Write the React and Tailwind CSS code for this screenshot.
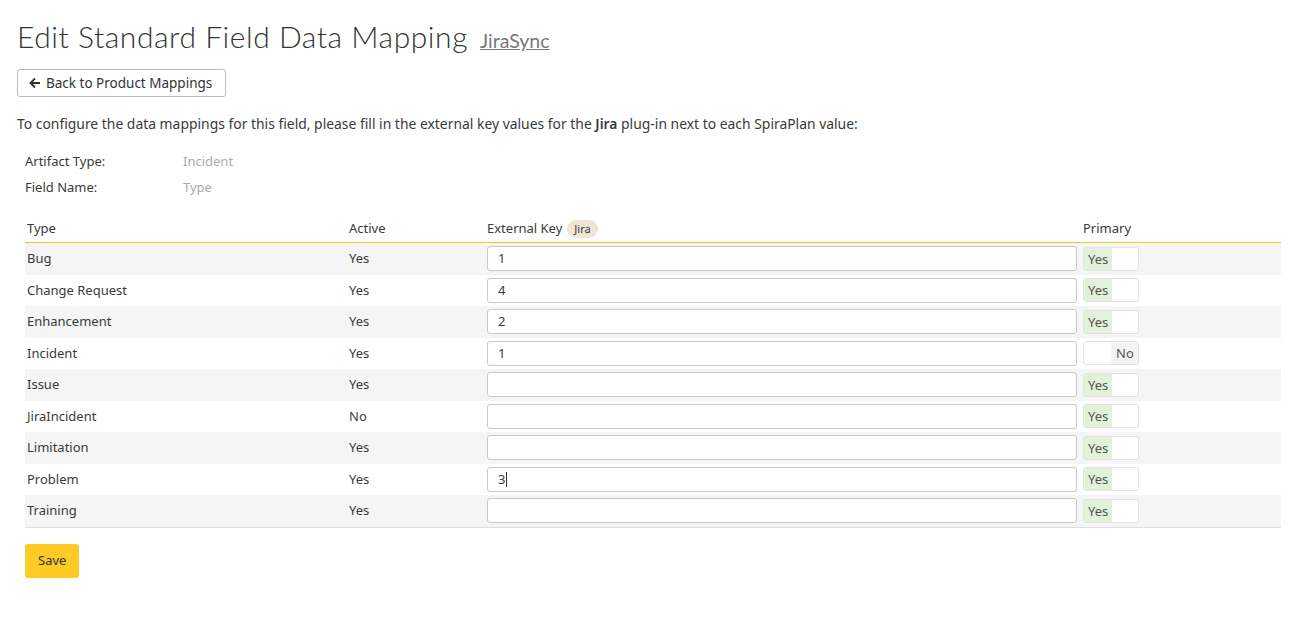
import React from 'react';

const rows = [
  { type: 'Bug', active: 'Yes', key: '1', primary: true },
  { type: 'Change Request', active: 'Yes', key: '4', primary: true },
  { type: 'Enhancement', active: 'Yes', key: '2', primary: true },
  { type: 'Incident', active: 'Yes', key: '1', primary: false },
  { type: 'Issue', active: 'Yes', key: '', primary: true },
  { type: 'JiraIncident', active: 'No', key: '', primary: true },
  { type: 'Limitation', active: 'Yes', key: '', primary: true },
  { type: 'Problem', active: 'Yes', key: '3', primary: true, caret: true },
  { type: 'Training', active: 'Yes', key: '', primary: true },
];

const Toggle = ({ on }) => (
  <div className="flex h-[24px] w-[56px] overflow-hidden rounded-[3px] border border-[#e2e2e2] bg-white text-[13px] leading-[22px] text-[#555]">
    {on ? (
      <>
        <div className="w-[28px] bg-[#e1f1da] pl-[4px]">Yes</div>
        <div className="flex-1" />
      </>
    ) : (
      <>
        <div className="w-[27px]" />
        <div className="flex-1 bg-[#f3f3f3] pl-[5px]">No</div>
      </>
    )}
  </div>
);

export default function App() {
  return (
    <div className="min-h-screen bg-white text-[13px] text-[#3a3a3a]" style={{ fontFamily: '"Noto Sans", sans-serif' }}>
      <div className="px-[17px] pt-[14px]">
        <h1 className="flex items-baseline text-[#333]">
          <span className="text-[30px] font-light tracking-[0.55px]" style={{ fontFamily: 'Lato, sans-serif' }}>
            Edit Standard Field Data Mapping
          </span>
          <a href="#" className="ml-[12px] text-[19.5px] font-normal text-[#777] underline" style={{ fontFamily: 'Lato, sans-serif' }}>
            JiraSync
          </a>
        </h1>

        <button className="mt-[10px] flex h-[28px] items-center gap-[5px] rounded-[3px] border border-[#bbb] bg-white pl-[11px] pr-[13px] text-[13.5px] text-[#333]">
          <svg width="12" height="12" viewBox="0 0 12 12" fill="none" stroke="#333" strokeWidth="1.8">
            <path d="M11 6H2M6 1.5L1.5 6 6 10.5" />
          </svg>
          Back to Product Mappings
        </button>

        <p className="mt-[17px] text-[13.9px] leading-[20px]">
          To configure the data mappings for this field, please fill in the external key values for the <b className="font-semibold">Jira</b> plug-in next to each SpiraPlan value:
        </p>

        <div className="mt-[15px] pl-[8px]">
          <div className="flex h-[26px] items-center">
            <span className="w-[158px]">Artifact Type:</span>
            <span className="text-[#aaa]">Incident</span>
          </div>
          <div className="flex h-[26px] items-center">
            <span className="w-[158px]">Field Name:</span>
            <span className="text-[#aaa]">Type</span>
          </div>
        </div>

        <div className="ml-[8px] mr-[2px] mt-[14px] border-b border-[#ddd]">
          <div className="flex h-[28px] items-center border-b border-[#f3c42c]">
            <div className="w-[324px] pl-[2px]">Type</div>
            <div className="w-[138px]">Active</div>
            <div className="flex w-[596px] items-center gap-[5px]">
              External Key
              <span className="rounded-full bg-[#efe6d2] px-[7px] text-[11px] leading-[18px]">Jira</span>
            </div>
            <div>Primary</div>
          </div>
          {rows.map((r, i) => (
            <div key={r.type} className={`flex h-[31.5px] items-center ${i % 2 === 0 ? 'bg-[#f5f5f5]' : 'bg-white'}`}>
              <div className="w-[324px] pl-[2px]">{r.type}</div>
              <div className="w-[138px]">{r.active}</div>
              <div className="w-[596px] pr-[6px]">
                <div className="flex h-[25px] items-center rounded-[3px] border border-[#c9c9c9] bg-white px-[10px]">
                  {r.key}
                  {r.caret && <span className="ml-[1px] inline-block h-[15px] w-px bg-[#333]" />}
                </div>
              </div>
              <Toggle on={r.primary} />
            </div>
          ))}
        </div>

        <button className="ml-[8px] mt-[16px] h-[34px] rounded-[3px] bg-[#fdca26] px-[13px] text-[13px] text-[#333]">
          Save
        </button>
      </div>
    </div>
  );
}
